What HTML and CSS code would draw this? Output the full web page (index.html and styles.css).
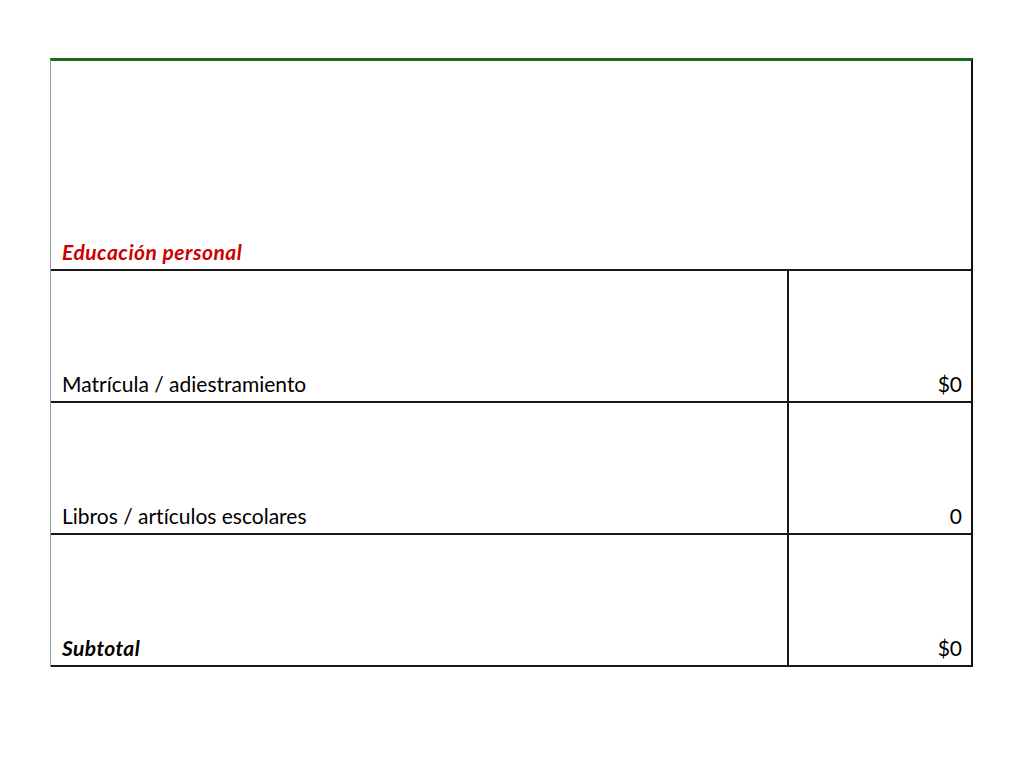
FILE: index.html
```html
<!DOCTYPE html>
<html lang="es">
<head>
<meta charset="utf-8">
<title>Educación personal</title>
<link rel="stylesheet" href="styles.css">
</head>
<body>
<div class="sheet">
  <div class="header-row">
    <div class="cell title">Educación personal</div>
  </div>
  <div class="row">
    <div class="cell label">Matrícula / adiestramiento</div>
    <div class="cell value">$0</div>
  </div>
  <div class="row">
    <div class="cell label">Libros / artículos escolares</div>
    <div class="cell value">0</div>
  </div>
  <div class="row">
    <div class="cell label total">Subtotal</div>
    <div class="cell value">$0</div>
  </div>
</div>
</body>
</html>
```
FILE: styles.css
```css
html, body {
  margin: 0;
  padding: 0;
  background: #ffffff;
}
body {
  font-family: "Lato", "Liberation Sans", sans-serif;
  font-size: 21px;
  color: #000;
  font-variant-ligatures: none;
}
.sheet {
  margin: 58px 0 0 50px;
  width: 923px;
  box-sizing: border-box;
  border-top: 3px solid #1c6a1c;
  border-left: 1px solid #9a9a9a;
  border-right: 2px solid #111;
}
.header-row {
  height: 208px;
  border-bottom: 2px solid #1a1a1a;
  display: flex;
  align-items: flex-end;
}
.row {
  height: 130px;
  border-bottom: 2px solid #1a1a1a;
  display: grid;
  grid-template-columns: 736px 1fr;
}
.cell {
  display: flex;
  align-items: flex-end;
  padding: 0 9px 5px 11px;
  line-height: 24px;
}
.title {
  color: #cc0000;
  font-weight: bold;
  font-style: italic;
  letter-spacing: 0.5px;
}
.value {
  border-left: 2px solid #1a1a1a;
  justify-content: flex-end;
}
.total {
  font-weight: bold;
  font-style: italic;
  letter-spacing: 0.4px;
}
```
